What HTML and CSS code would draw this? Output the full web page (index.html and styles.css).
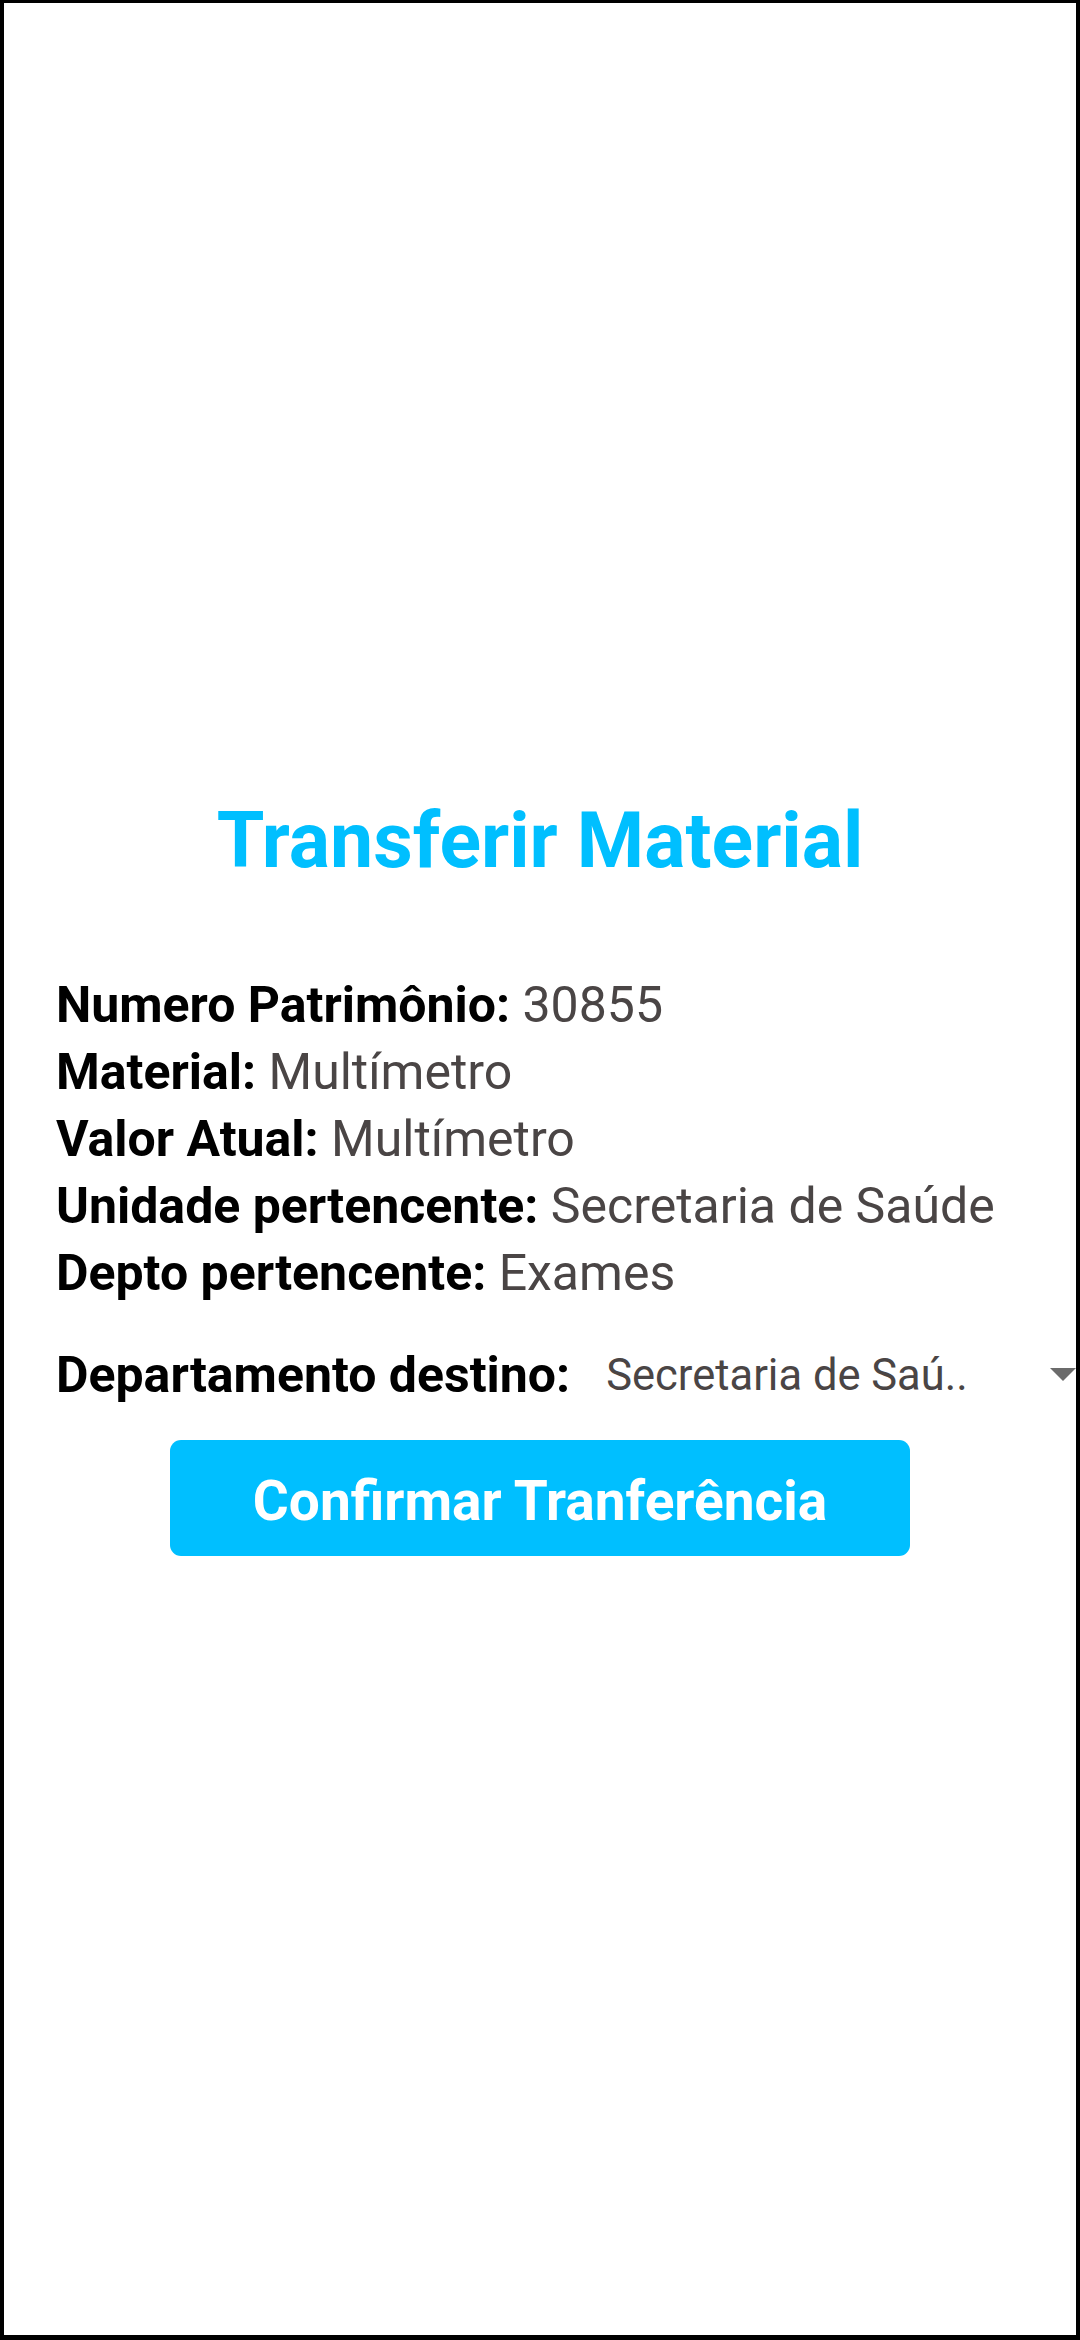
FILE: index.html
```html
<!DOCTYPE html>
<html lang="pt-BR">
<head>
<meta charset="utf-8">
<title>Transferir Material</title>
<link rel="stylesheet" href="styles.css">
</head>
<body>
<main class="screen">
  <h1 class="title">Transferir Material</h1>
  <section class="info">
    <p class="line"><span class="label">Numero Patrimônio:</span> <span class="value">30855</span></p>
    <p class="line"><span class="label">Material:</span> <span class="value">Multímetro</span></p>
    <p class="line"><span class="label">Valor Atual:</span> <span class="value">Multímetro</span></p>
    <p class="line"><span class="label">Unidade pertencente:</span> <span class="value">Secretaria de Saúde</span></p>
    <p class="line"><span class="label">Depto pertencente:</span> <span class="value">Exames</span></p>
  </section>
  <div class="dest-row">
    <span class="label">Departamento destino:</span>
    <div class="picker">
      <span class="picker-value">Secretaria de Saú..</span>
      <span class="picker-arrow"></span>
    </div>
  </div>
  <div class="actions">
    <button class="confirm" type="button">Confirmar Tranferência</button>
  </div>
</main>
</body>
</html>
```
FILE: styles.css
```css
* { box-sizing: border-box; }
html, body { margin: 0; padding: 0; background: #ffffff; }
body { font-family: Roboto, "Noto Sans", "Liberation Sans", sans-serif; }

.screen {
  width: 1080px;
  height: 2340px;
  border-style: solid;
  border-color: #000000;
  border-width: 3px 4px 5px 4px;
  background: #ffffff;
  padding-top: 792px;
  display: flex;
  flex-direction: column;
  overflow: hidden;
}

.title {
  margin: 0;
  font-size: 77px;
  line-height: 92px;
  font-weight: 700;
  color: #00bfff;
  text-align: center;
}

.info {
  margin-top: 85px;
  padding-left: 52px;
}

.line {
  margin: 0;
  font-size: 50px;
  line-height: 67px;
  white-space: nowrap;
}

.label {
  font-weight: 700;
  color: #000000;
}

.value {
  font-weight: 400;
  color: #4a4545;
}

.dest-row {
  margin-top: 35px;
  padding-left: 52px;
  display: flex;
  align-items: center;
  height: 67px;
  font-size: 50px;
  line-height: 67px;
}

.picker {
  flex: 1;
  display: flex;
  align-items: center;
  justify-content: space-between;
  padding-left: 36px;
}

.picker-value {
  font-size: 43.5px;
  color: #4a4545;
  white-space: nowrap;
}

.picker-arrow {
  width: 0;
  height: 0;
  border-left: 13px solid transparent;
  border-right: 13px solid transparent;
  border-top: 13px solid #6b6b6b;
  margin-top: -2px;
}

.actions {
  margin-top: 31px;
  display: flex;
  justify-content: center;
}

.confirm {
  width: 740px;
  height: 116px;
  border: none;
  border-radius: 11px;
  background: #00bfff;
  color: #ffffff;
  font-family: Roboto, "Noto Sans", "Liberation Sans", sans-serif;
  font-size: 55px;
  font-weight: 700;
  padding: 6px 0 0 0;
  line-height: 1;
}
```
